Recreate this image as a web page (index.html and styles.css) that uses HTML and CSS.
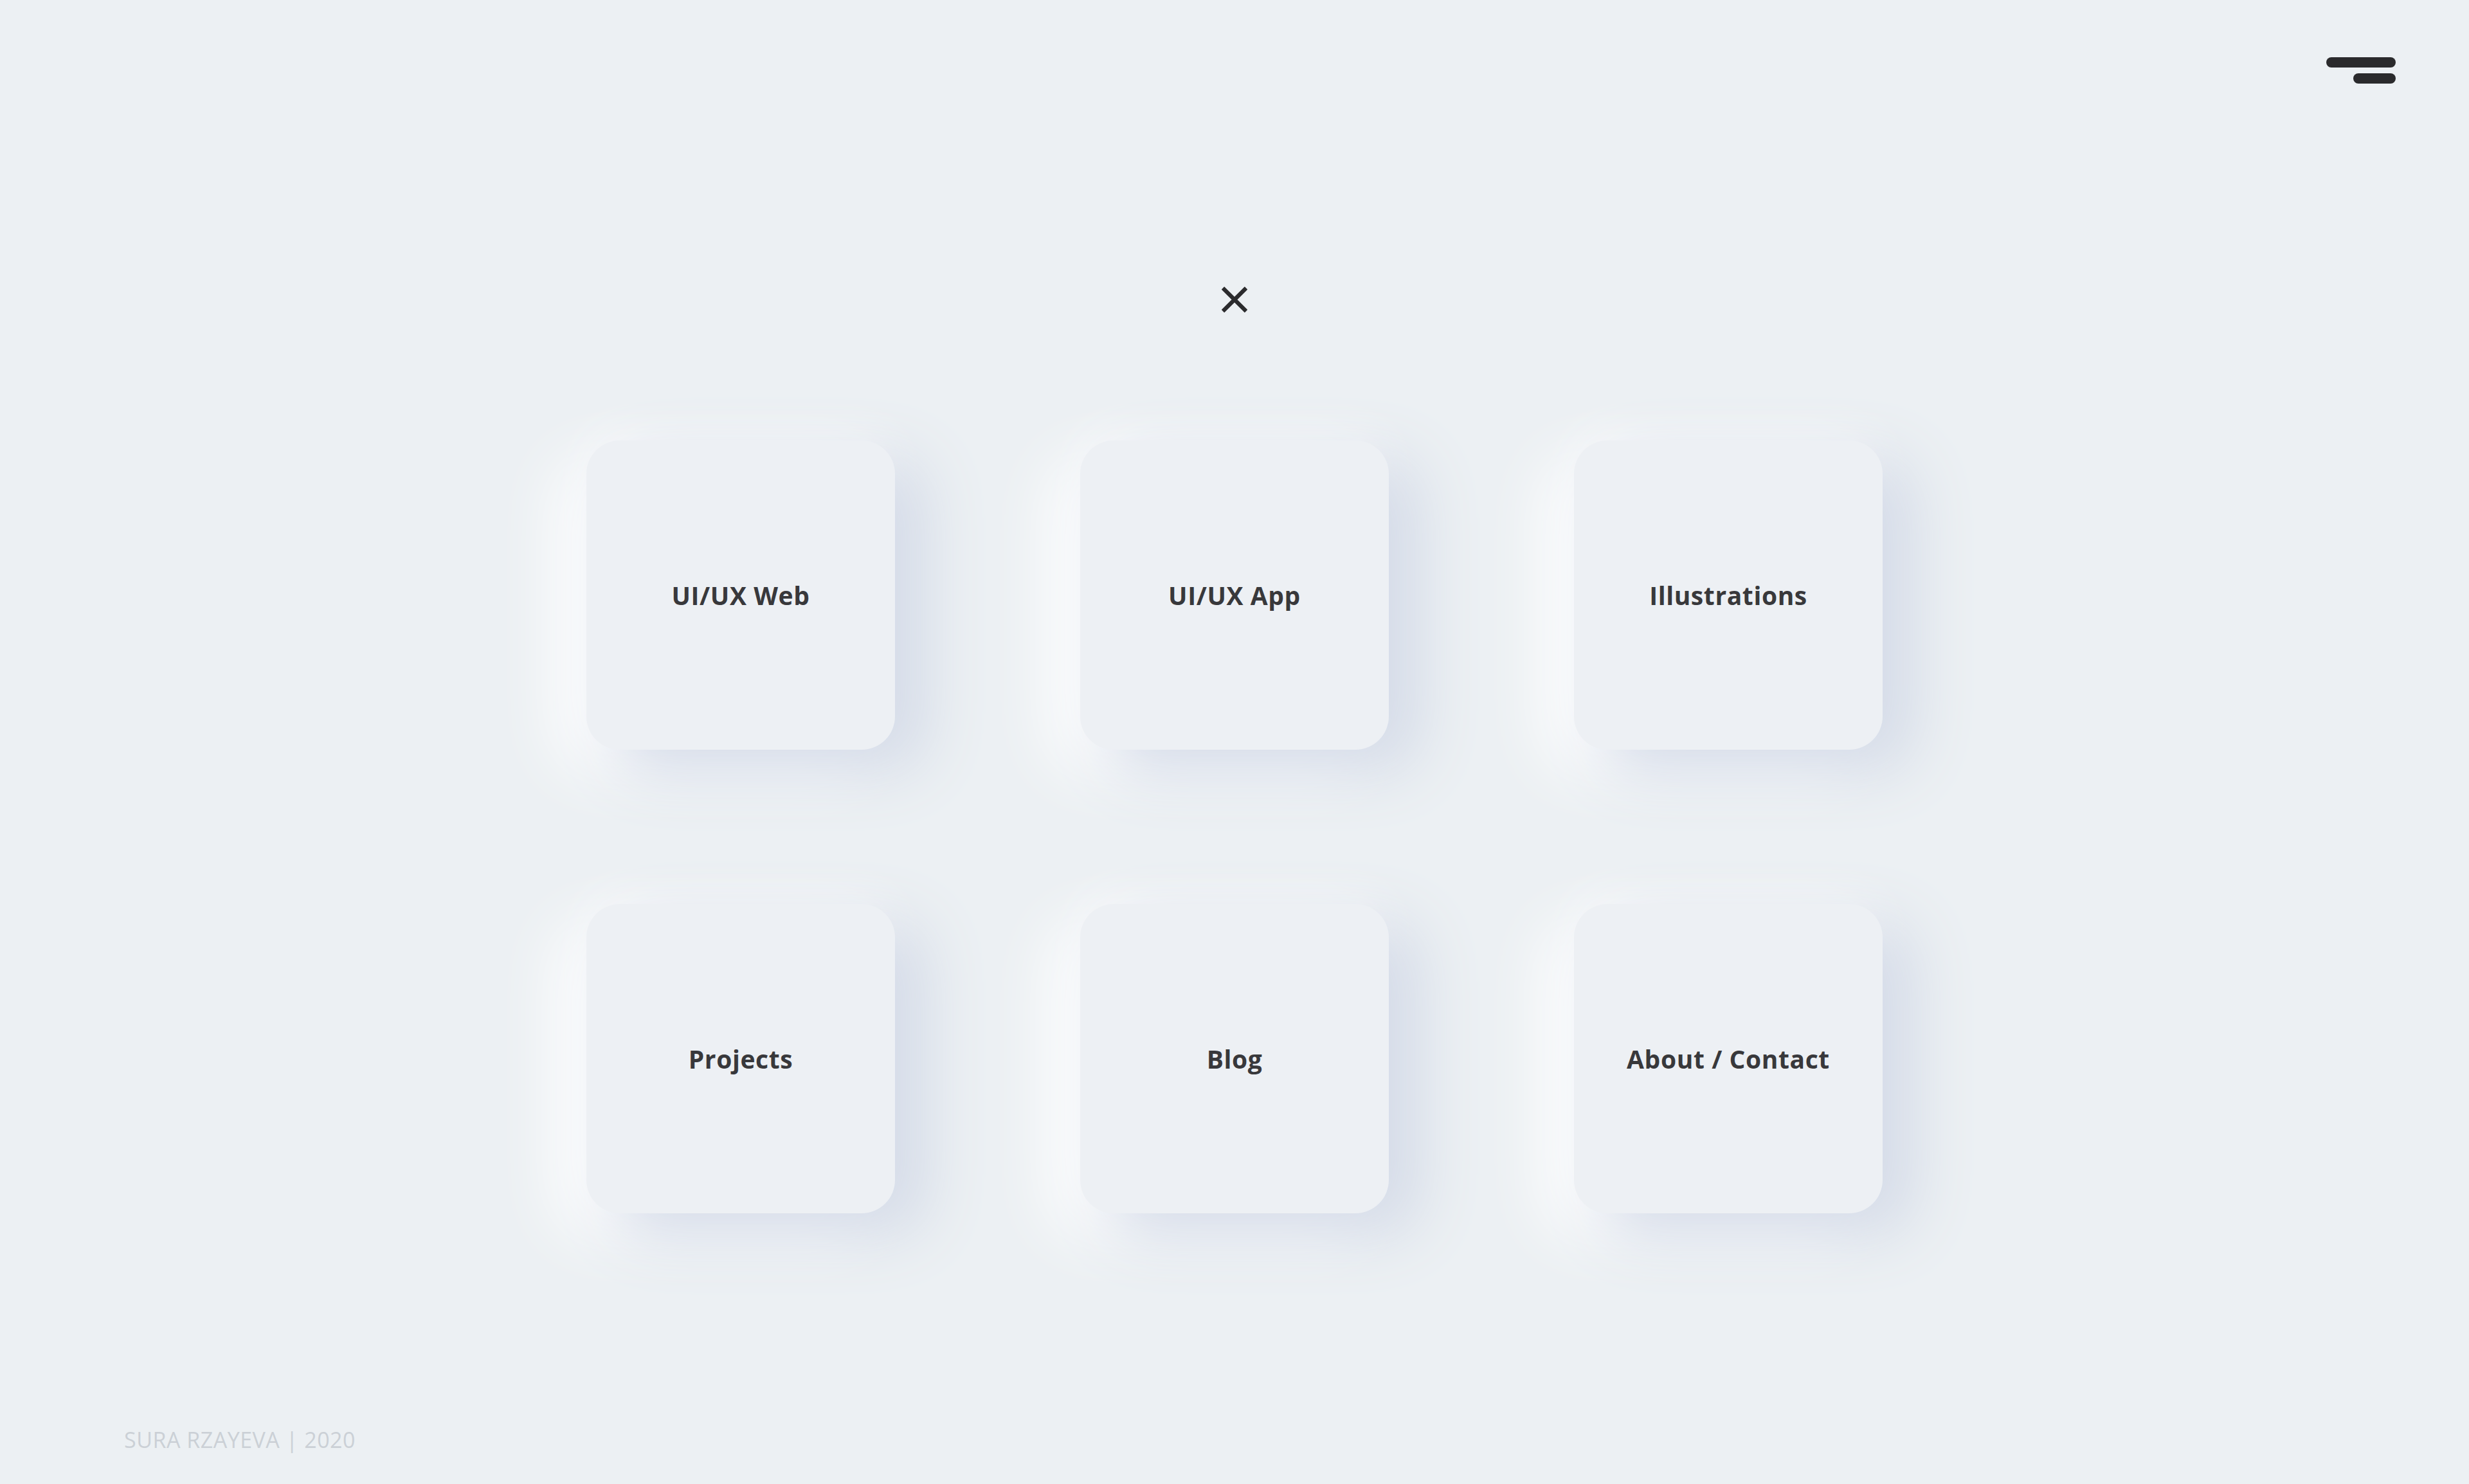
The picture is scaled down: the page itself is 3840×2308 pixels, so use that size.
FILE: index.html
```html
<!DOCTYPE html>
<html lang="en">
<head>
<meta charset="utf-8">
<title>Menu</title>
<link rel="stylesheet" href="styles.css">
</head>
<body>
<div class="page">
  <header class="topbar">
    <button class="burger" aria-label="Menu">
      <span class="bar bar-long"></span>
      <span class="bar bar-short"></span>
    </button>
  </header>
  <main class="menu">
    <button class="close" aria-label="Close">
      <svg width="48" height="48" viewBox="0 0 48 48">
        <path d="M5 5 L43 43 M43 5 L5 43" stroke="#2b2b2d" stroke-width="7.5" stroke-linecap="square" fill="none"/>
      </svg>
    </button>
    <nav class="grid">
      <a class="card">UI/UX Web</a>
      <a class="card">UI/UX App</a>
      <a class="card">Illustrations</a>
      <a class="card">Projects</a>
      <a class="card">Blog</a>
      <a class="card">About / Contact</a>
    </nav>
  </main>
  <footer class="footer">SURA RZAYEVA | 2020</footer>
</div>
</body>
</html>
```

FILE: styles.css
```css
html, body {
  margin: 0;
  padding: 0;
  background: #ecf0f3;
}
.page {
  min-height: 2308px;
  display: flex;
  flex-direction: column;
  font-family: "Open Sans", "Noto Sans", sans-serif;
}
.topbar {
  display: flex;
  justify-content: flex-end;
  padding: 89px 114px 0 0;
}
.burger {
  width: 108px;
  padding: 0;
  border: 0;
  background: none;
  display: flex;
  flex-direction: column;
  align-items: flex-end;
  gap: 9px;
}
.bar {
  display: block;
  height: 16px;
  border-radius: 8px;
  background: #2a2a2c;
}
.bar-long { width: 108px; }
.bar-short { width: 66px; }
.menu {
  display: flex;
  flex-direction: column;
  align-items: center;
}
.close {
  margin-top: 312px;
  width: 48px;
  height: 48px;
  padding: 0;
  border: 0;
  background: none;
}
.close svg { display: block; width: 40px; height: 40px; margin: 4px; }
.grid {
  margin-top: 195px;
  display: grid;
  grid-template-columns: repeat(3, 480px);
  grid-auto-rows: 481px;
  column-gap: 288px;
  row-gap: 240px;
}
.card {
  display: flex;
  align-items: center;
  justify-content: center;
  border-radius: 52px;
  background: #edf0f4;
  box-shadow: 45px 30px 100px #d2d9e7, -45px 30px 100px #ffffff, 0 -20px 60px rgba(255, 255, 255, 0.5);
  color: #38383b;
  font-weight: 700;
  font-size: 39px;
  letter-spacing: 0.6px;
  text-decoration: none;
}
.footer {
  margin-top: auto;
  padding: 0 0 52px 193px;
  font-size: 34px;
  line-height: 34px;
  color: #cbd0d6;
  letter-spacing: 0.5px;
}
```
